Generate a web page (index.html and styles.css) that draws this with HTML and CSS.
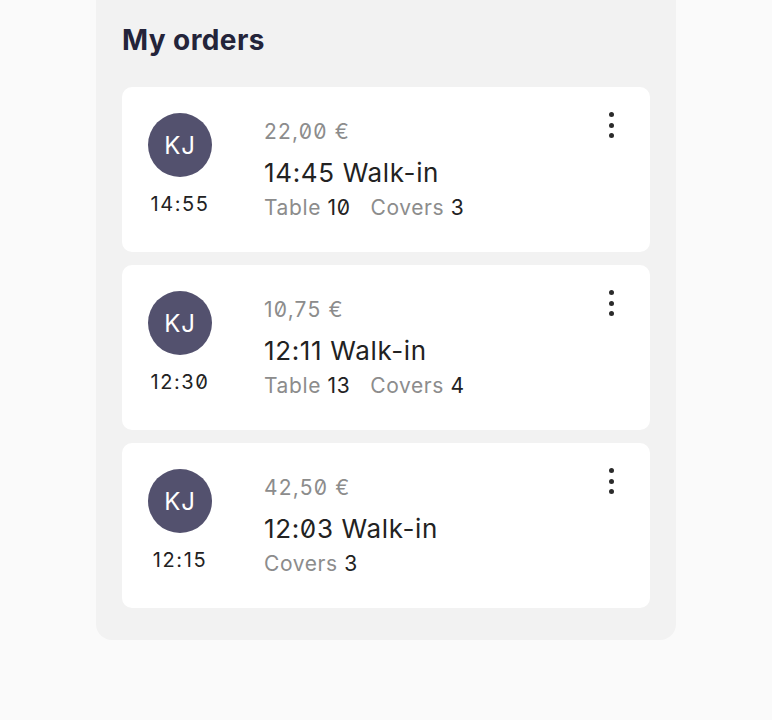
FILE: index.html
```html
<!DOCTYPE html>
<html lang="en">
<head>
<meta charset="utf-8">
<link rel="stylesheet" href="styles.css">
</head>
<body>
<div class="page">
  <section class="panel">
    <h1 class="title">My orders</h1>
    <div class="list">
      <article class="card">
        <div class="left">
          <div class="avatar">KJ</div>
          <div class="time">14:55</div>
        </div>
        <div class="info">
          <div class="price">22,00 €</div>
          <div class="name">14:45 Walk-in</div>
          <div class="meta"><span class="label">Table</span> <span class="val">10</span><span class="label gap">Covers</span> <span class="val">3</span></div>
        </div>
        <button class="more" aria-label="More"><span></span><span></span><span></span></button>
      </article>
      <article class="card">
        <div class="left">
          <div class="avatar">KJ</div>
          <div class="time">12:30</div>
        </div>
        <div class="info">
          <div class="price">10,75 €</div>
          <div class="name">12:11 Walk-in</div>
          <div class="meta"><span class="label">Table</span> <span class="val">13</span><span class="label gap">Covers</span> <span class="val">4</span></div>
        </div>
        <button class="more" aria-label="More"><span></span><span></span><span></span></button>
      </article>
      <article class="card">
        <div class="left">
          <div class="avatar">KJ</div>
          <div class="time">12:15</div>
        </div>
        <div class="info">
          <div class="price">42,50 €</div>
          <div class="name">12:03 Walk-in</div>
          <div class="meta"><span class="label">Covers</span> <span class="val">3</span></div>
        </div>
        <button class="more" aria-label="More"><span></span><span></span><span></span></button>
      </article>
    </div>
  </section>
</div>
</body>
</html>
```
FILE: styles.css
```css
* { box-sizing: border-box; }
html, body { margin: 0; padding: 0; }
body {
  background: #fafafa;
  font-family: Inter, "Noto Sans", sans-serif;
  color: #222;
}
.page {
  display: flex;
  justify-content: center;
  height: 720px;
  overflow: hidden;
}
.panel {
  width: 580px;
  margin-top: -20px;
  align-self: flex-start;
  background: #f2f2f2;
  border-radius: 16px;
  padding: 40px 26px 32px;
}
.title {
  margin: 0 0 27px;
  font-size: 28px;
  line-height: 40px;
  font-weight: 650;
  color: #24243a;
  letter-spacing: 0.4px;
}
.list {
  display: flex;
  flex-direction: column;
  gap: 13px;
}
.card {
  position: relative;
  display: flex;
  background: #fff;
  border-radius: 10px;
  height: 165px;
  padding: 26px 26px 0 26px;
}
.left {
  width: 64px;
  display: flex;
  flex-direction: column;
  align-items: center;
}
.avatar {
  width: 64px;
  height: 64px;
  border-radius: 50%;
  background: #53516e;
  color: #fff;
  display: flex;
  align-items: center;
  justify-content: center;
  font-size: 24px;
  letter-spacing: 0.8px;
}
.time {
  margin-top: 15px;
  font-size: 20px;
  line-height: 24px;
  letter-spacing: 1.6px;
  color: #222;
  font-feature-settings: "zero" 1;
}
.info {
  margin-left: 52px;
  padding-top: 5px;
  font-feature-settings: "zero" 1;
}
.price {
  font-size: 21px;
  line-height: 28px;
  color: #8c8c8c;
  letter-spacing: 1.2px;
}
.name {
  margin-top: 11px;
  font-size: 26px;
  line-height: 32px;
  color: #222;
  letter-spacing: 0.65px;
}
.meta {
  margin-top: 6px;
  font-size: 21px;
  line-height: 26px;
  letter-spacing: 0.6px;
}
.label { color: #8c8c8c; }
.val { color: #222; }
.gap { margin-left: 20px; }
.more {
  position: absolute;
  top: 20px;
  right: 27px;
  width: 24px;
  height: 36px;
  border: 0;
  background: transparent;
  padding: 0;
  display: flex;
  flex-direction: column;
  align-items: center;
  justify-content: center;
  gap: 5.3px;
}
.more span {
  width: 5px;
  height: 5px;
  border-radius: 50%;
  background: #2b2b2b;
}
```
